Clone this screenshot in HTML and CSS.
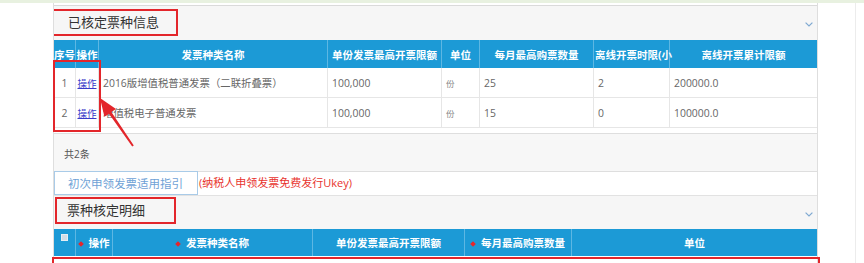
FILE: index.html
```html
<!DOCTYPE html>
<html lang="zh-CN">
<head>
<meta charset="utf-8">
<title>票种核定</title>
<link rel="stylesheet" href="styles.css">
</head>
<body>
<div class="topbar"></div>
<div class="layout">
  <div class="gutter"></div>
  <main class="panel">
    <div class="sec-head sec-head-1">
      <h2 class="sec-title t1">已核定票种信息</h2>
      <svg class="chev" width="8" height="5" viewBox="0 0 8 5"><polyline points="0.6,0.6 4,4 7.4,0.6" fill="none" stroke="#7fa9d2" stroke-width="1.2"/></svg>
    </div>
    <table class="grid grid-1">
      <colgroup>
        <col class="w22"><col class="w23"><col class="w229"><col class="w114"><col class="w38"><col class="w114"><col class="w76"><col class="w147">
      </colgroup>
      <thead>
        <tr><th>序号</th><th>操作</th><th>发票种类名称</th><th>单份发票最高开票限额</th><th>单位</th><th>每月最高购票数量</th><th class="th-left">离线开票时限(小</th><th>离线开票累计限额</th></tr>
      </thead>
      <tbody>
        <tr><td class="ctr">1</td><td class="ctr"><a class="op" href="#">操作</a></td><td>2016版增值税普通发票（二联折叠票）</td><td>100,000</td><td class="unit">份</td><td>25</td><td>2</td><td>200000.0</td></tr>
        <tr><td class="ctr">2</td><td class="ctr"><a class="op" href="#">操作</a></td><td>增值税电子普通发票</td><td>100,000</td><td class="unit">份</td><td>15</td><td>0</td><td>100000.0</td></tr>
      </tbody>
    </table>
    <div class="pager">共2条</div>
    <div class="guide">
      <button class="guide-btn" type="button">初次申领发票适用指引</button>
      <span class="guide-note">(纳税人申领发票免费发行Ukey)</span>
    </div>
    <div class="sec-head sec-head-2">
      <h2 class="sec-title t2">票种核定明细</h2>
      <svg class="chev" width="8" height="5" viewBox="0 0 8 5"><polyline points="0.6,0.6 4,4 7.4,0.6" fill="none" stroke="#7fa9d2" stroke-width="1.2"/></svg>
    </div>
    <table class="grid grid-2">
      <colgroup>
        <col class="w22"><col class="w37"><col class="w200"><col class="w152"><col class="w107"><col class="w245">
      </colgroup>
      <thead>
        <tr><th class="cb-cell"><span class="cb"></span></th><th><span class="req">操作</span></th><th><span class="req">发票种类名称</span></th><th>单份发票最高开票限额</th><th><span class="req">每月最高购票数量</span></th><th>单位</th></tr>
      </thead>
    </table>
  </main>
  <div class="gutter-r"></div>
</div>
<div class="mark mark-rows"></div>
<div class="mark mark-bottom"></div>
<svg class="arrow" width="864" height="263" viewBox="0 0 864 263">
  <polygon points="133.8,145.4 111.4,112.0 116.0,108.9 100,98 104.4,116.8 109.0,113.7 132.2,146.6" fill="#e3262b"/>
</svg>
</body>
</html>
```

FILE: styles.css
```css
html, body {
  margin: 0;
  padding: 0;
  background: #fff;
}
body {
  position: relative;
  width: 864px;
  height: 263px;
  overflow: hidden;
  font-family: "Open Sans", "Noto Sans CJK SC", sans-serif;
  color: #666;
}
.topbar {
  height: 3px;
  background: #e8f1e0;
}
.layout {
  display: grid;
  grid-template-columns: 53px 765px 38px;
  height: 260px;
}
.gutter-r {
  border-right: 1px solid #ececec;
}
.panel {
  box-sizing: border-box;
  border-left: 1px solid #dedede;
  border-right: 1px solid #dedede;
  padding-top: 2px;
  overflow: hidden;
}
.sec-head {
  display: flex;
  justify-content: space-between;
  align-items: flex-start;
  background: #f6f6f6;
}
.sec-head-1 {
  height: 35px;
  box-sizing: border-box;
  border-top: 1px solid #dadada;
}
.sec-head-2 {
  height: 33px;
}
.sec-title {
  margin: 0;
  box-sizing: border-box;
  height: 27px;
  border: 2px solid #e3262b;
  font-size: 13px;
  font-weight: normal;
  line-height: 23px;
  color: #333;
  white-space: nowrap;
}
.t1 {
  width: 127px;
  margin: 3px 0 0 -3px;
  padding-left: 15px;
}
.t2 {
  width: 121px;
  margin: 1px 0 0 1px;
  padding-left: 10px;
}
.chev {
  display: block;
  margin: 16px 4px 0 0;
}
.grid {
  width: 763px;
  table-layout: fixed;
  border-collapse: separate;
  border-spacing: 0;
}
.w22 { width: 22px; }
.w23 { width: 23px; }
.w37 { width: 37px; }
.w38 { width: 38px; }
.w76 { width: 76px; }
.w107 { width: 107px; }
.w114 { width: 114px; }
.w147 { width: 147px; }
.w152 { width: 152px; }
.w200 { width: 200px; }
.w229 { width: 229px; }
.w245 { width: 245px; }
.grid th {
  box-sizing: border-box;
  height: 28px;
  padding: 0;
  background: #1c9ad6;
  color: #fff;
  font-size: 10.5px;
  font-weight: bold;
  text-align: center;
  white-space: nowrap;
  border-right: 1px solid #5db7e3;
}
.grid th.th-left {
  text-align: left;
  padding-left: 1px;
}
.grid th:last-child {
  border-right: none;
}
.grid-2 th {
  height: 27px;
}
.grid td {
  box-sizing: border-box;
  height: 30px;
  padding: 0 4px;
  font-size: 10.4px;
  color: #666;
  white-space: nowrap;
  border-right: 1px solid #e6e6e6;
  border-bottom: 1px solid #e6e6e6;
}
.grid td:last-child {
  border-right: none;
}
.grid td.ctr {
  text-align: center;
  padding: 0;
}
.grid td.unit {
  font-size: 8.5px;
  color: #888;
}
.op {
  font-size: 9.5px;
  color: #3a3ac8;
  text-decoration: underline;
}
.cb-cell {
  vertical-align: top;
}
.cb {
  display: block;
  box-sizing: border-box;
  width: 7px;
  height: 7px;
  margin: 5px auto 0;
  background: #d3dde6;
  border: 1px solid #e6edf3;
}
.req::before {
  content: "";
  display: inline-block;
  width: 4px;
  height: 4px;
  margin: 0 6px 1px 0;
  background: #e5262c;
  transform: rotate(45deg);
  vertical-align: middle;
}
.pager {
  box-sizing: border-box;
  height: 39px;
  margin-top: 5px;
  padding: 13px 0 0 10px;
  background: #f7f7f7;
  border-top: 1px solid #dedede;
  border-bottom: 1px solid #dedede;
  font-size: 10px;
  line-height: 14px;
  color: #555;
}
.guide {
  display: flex;
  align-items: flex-start;
  height: 23px;
  border-bottom: 1px solid #e2e2e2;
}
.guide-btn {
  box-sizing: border-box;
  width: 144px;
  height: 24px;
  margin: -1px 0 0 0;
  padding: 0 0 0 13px;
  background: #fff;
  border: 1px solid #a9cbe8;
  font-family: "Open Sans", "Noto Sans CJK SC", sans-serif;
  font-size: 11.5px;
  color: #6fa2d6;
  text-align: left;
  white-space: nowrap;
}
.guide-note {
  margin-left: 1px;
  font-size: 11px;
  line-height: 22px;
  color: #e8332d;
  white-space: nowrap;
}
.mark {
  position: absolute;
  box-sizing: border-box;
  border: 2px solid #e3262b;
}
.mark-rows {
  left: 53px;
  top: 60px;
  width: 48px;
  height: 72px;
}
.mark-bottom {
  left: 52px;
  top: 257px;
  width: 768px;
  height: 6px;
  border-bottom-width: 0;
}
.arrow {
  position: absolute;
  left: 0;
  top: 0;
  pointer-events: none;
}
```
